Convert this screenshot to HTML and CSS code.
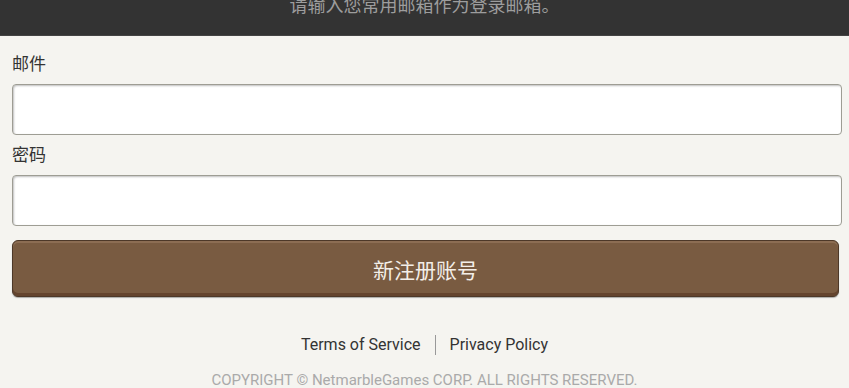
FILE: index.html
```html
<!DOCTYPE html>
<html lang="zh-CN">
  <head>
    <meta charset="utf-8">
    <title>新注册账号</title>
    <link rel="stylesheet" href="styles.css">
  </head>
  <body>
    <header class="notice">
      <p class="notice-text">请输入您常用邮箱作为登录邮箱。</p>
    </header>
    <form class="signup">
      <label class="field-label" for="email">邮件</label>
      <input id="email" class="field-input" type="email">
      <label class="field-label" for="password">密码</label>
      <input id="password" class="field-input" type="password">
      <button type="button" class="submit-btn">新注册账号</button>
    </form>
    <footer class="footer">
      <nav class="footer-links">
        <a href="#">Terms of Service</a>
        <span class="sep"></span>
        <a href="#">Privacy Policy</a>
      </nav>
      <p class="copyright">COPYRIGHT © NetmarbleGames CORP. ALL RIGHTS RESERVED.</p>
    </footer>
  </body>
</html>
```

FILE: styles.css
```css
html, body {
  margin: 0;
  padding: 0;
}
body {
  background: #f5f4f0;
  font-family: Roboto, "Noto Sans CJK SC", sans-serif;
  color: #333;
  overflow: hidden;
}
.notice {
  height: 35px;
  background: #333;
  border-bottom: 1px solid #444;
  overflow: hidden;
}
.notice-text {
  margin: -3px 0 0;
  text-align: center;
  font-size: 18px;
  line-height: 18px;
  color: #9d9d9d;
}
.signup {
  display: flex;
  flex-direction: column;
  padding: 16px 7px 0 12px;
}
.field-label {
  font-size: 17px;
  line-height: 25px;
  color: #333;
  margin-bottom: 7px;
}
.field-input {
  box-sizing: border-box;
  height: 51px;
  margin: 0 0 8px;
  border: 1px solid #9e9d94;
  border-radius: 4px;
  background: #fff;
  box-shadow: inset 1px 1px 2px rgba(0, 0, 0, 0.25);
  font-size: 17px;
}
.submit-btn {
  box-sizing: border-box;
  height: 57px;
  margin: 6px 3px 0 0;
  border: 1px solid #4d3828;
  border-radius: 6px;
  background: #795b41;
  box-shadow: inset 0 2px 0 #8c6d53, inset 0 -3px 0 #64442e, 0 1px 1px rgba(0, 0, 0, 0.3);
  color: #f3eee8;
  font-family: Roboto, "Noto Sans CJK SC", sans-serif;
  font-size: 21px;
}
.footer {
  padding-top: 36px;
  text-align: center;
}
.footer-links {
  display: flex;
  justify-content: center;
  align-items: center;
  gap: 14px;
  line-height: 24px;
  font-size: 16px;
}
.footer-links a {
  color: #333;
  text-decoration: none;
}
.sep {
  width: 1px;
  height: 20px;
  background: #999;
}
.copyright {
  margin: 13px 0 0;
  font-size: 15px;
  line-height: 20px;
  color: #aaa;
}
```
